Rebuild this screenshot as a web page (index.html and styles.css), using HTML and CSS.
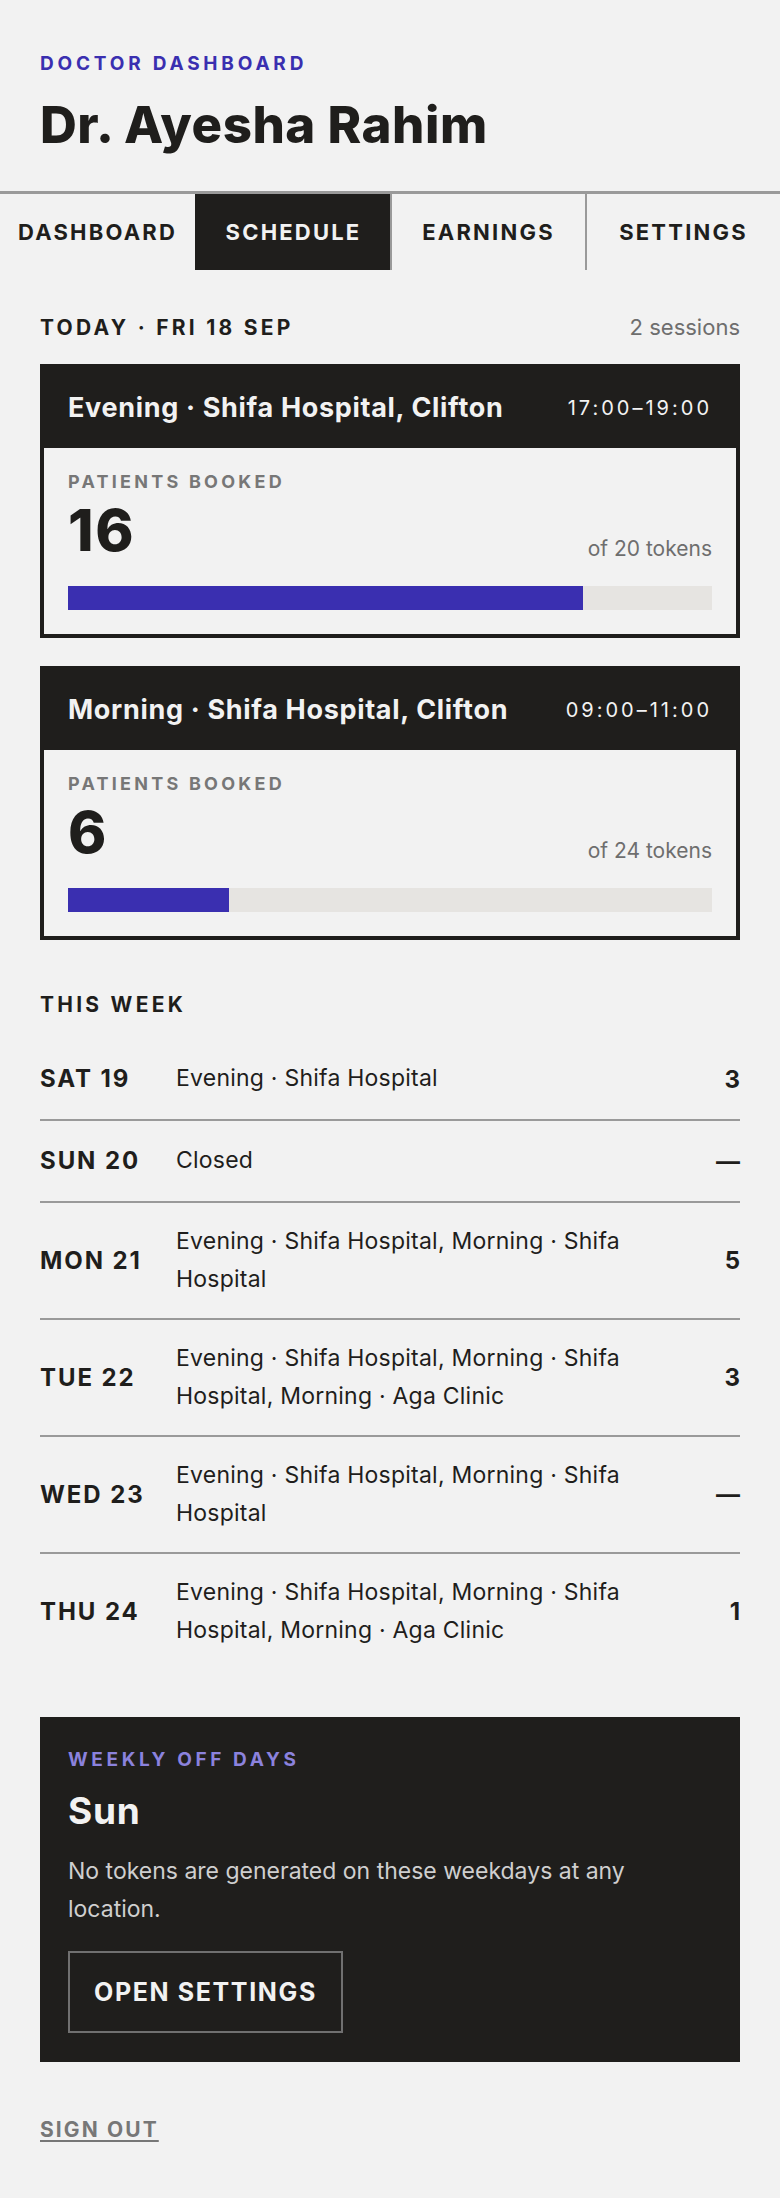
FILE: index.html
```html
<!DOCTYPE html>
<html lang="en">
<head>
<meta charset="utf-8">
<title>Doctor Dashboard – Schedule</title>
<link rel="stylesheet" href="styles.css">
</head>
<body>
<header class="top">
  <p class="eyebrow">Doctor Dashboard</p>
  <h1 class="name">Dr. Ayesha Rahim</h1>
</header>

<nav class="tabs">
  <a class="tab">Dashboard</a>
  <a class="tab active">Schedule</a>
  <a class="tab">Earnings</a>
  <a class="tab">Settings</a>
</nav>

<main class="content">
  <section class="today">
    <div class="section-head">
      <h2 class="section-title">Today · Fri 18 Sep</h2>
      <span class="meta">2 sessions</span>
    </div>

    <article class="session">
      <div class="session-head">
        <h3 class="session-title">Evening · Shifa Hospital, Clifton</h3>
        <span class="time">17:00–19:00</span>
      </div>
      <div class="session-body">
        <p class="label">Patients booked</p>
        <div class="count-row">
          <span class="count">16</span>
          <span class="of">of 20 tokens</span>
        </div>
        <div class="bar"><div class="fill" style="width:80%"></div></div>
      </div>
    </article>

    <article class="session">
      <div class="session-head">
        <h3 class="session-title">Morning · Shifa Hospital, Clifton</h3>
        <span class="time">09:00–11:00</span>
      </div>
      <div class="session-body">
        <p class="label">Patients booked</p>
        <div class="count-row">
          <span class="count">6</span>
          <span class="of">of 24 tokens</span>
        </div>
        <div class="bar"><div class="fill" style="width:25%"></div></div>
      </div>
    </article>
  </section>

  <section class="week">
    <h2 class="section-title week-title">This Week</h2>
    <ul class="days">
      <li class="day"><span class="day-name">SAT 19</span><span class="day-text">Evening · Shifa Hospital</span><span class="day-count">3</span></li>
      <li class="day"><span class="day-name">SUN 20</span><span class="day-text">Closed</span><span class="day-count">—</span></li>
      <li class="day"><span class="day-name">MON 21</span><span class="day-text">Evening · Shifa Hospital, Morning · Shifa Hospital</span><span class="day-count">5</span></li>
      <li class="day"><span class="day-name">TUE 22</span><span class="day-text">Evening · Shifa Hospital, Morning · Shifa Hospital, Morning · Aga Clinic</span><span class="day-count">3</span></li>
      <li class="day"><span class="day-name">WED 23</span><span class="day-text">Evening · Shifa Hospital, Morning · Shifa Hospital</span><span class="day-count">—</span></li>
      <li class="day"><span class="day-name">THU 24</span><span class="day-text">Evening · Shifa Hospital, Morning · Shifa Hospital, Morning · Aga Clinic</span><span class="day-count">1</span></li>
    </ul>
  </section>

  <section class="offdays">
    <p class="off-eyebrow">Weekly off days</p>
    <h2 class="off-title">Sun</h2>
    <p class="off-text">No tokens are generated on these weekdays at any location.</p>
    <a class="off-button">Open Settings</a>
  </section>

  <a class="signout">Sign out</a>
</main>
</body>
</html>
```

FILE: styles.css
```css
* { box-sizing: border-box; }

body {
  margin: 0;
  background: #f2f2f2;
  color: #1f1e1c;
  font-family: "Inter", "Liberation Sans", Arial, sans-serif;
}

/* Header */
.top {
  padding: 52px 40px 39px;
}
.eyebrow {
  margin: 0 0 22px;
  font-size: 19px;
  line-height: 23px;
  font-weight: 700;
  letter-spacing: 0.2em;
  text-transform: uppercase;
  color: #3a2fb0;
}
.name {
  margin: 0;
  font-size: 51px;
  line-height: 55px;
  font-weight: 800;
  letter-spacing: 0.01em;
}

/* Tabs */
.tabs {
  display: grid;
  grid-template-columns: repeat(4, 1fr);
  border-top: 3px solid #9a9a9a;
}
.tab {
  display: flex;
  align-items: center;
  justify-content: center;
  height: 76px;
  font-size: 22px;
  font-weight: 700;
  letter-spacing: 0.1em;
  text-transform: uppercase;
  color: #1f1e1c;
}
.tab + .tab {
  border-left: 2px solid #9a9a9a;
}
.tab.active {
  background: #1f1e1c;
  border-left-color: #1f1e1c;
  color: #f2f2f2;
}

/* Content */
.content {
  padding: 44px 40px 56px;
}
.section-head {
  display: flex;
  justify-content: space-between;
  align-items: baseline;
  margin-bottom: 22px;
}
.section-title {
  margin: 0;
  font-size: 21px;
  line-height: 28px;
  font-weight: 700;
  letter-spacing: 0.155em;
  text-transform: uppercase;
}
.meta {
  font-size: 22px;
  color: #6e6e6e;
}

/* Session cards */
.session {
  border: 4px solid #1f1e1c;
}
.session + .session {
  margin-top: 28px;
}
.session-head {
  display: flex;
  justify-content: space-between;
  align-items: center;
  padding: 24px;
  background: #1f1e1c;
  color: #f2f2f2;
}
.session-title {
  margin: 0;
  font-size: 27px;
  line-height: 32px;
  font-weight: 700;
  letter-spacing: 0.025em;
}
.time {
  font-size: 20px;
  letter-spacing: 0.15em;
}
.session-body {
  padding: 24px;
}
.label {
  margin: 0 0 10px;
  font-size: 18px;
  line-height: 20px;
  font-weight: 700;
  letter-spacing: 0.18em;
  text-transform: uppercase;
  color: #777;
}
.count-row {
  display: flex;
  justify-content: space-between;
  align-items: flex-end;
}
.count {
  font-size: 58px;
  line-height: 56px;
  font-weight: 800;
  letter-spacing: 0.03em;
}
.of {
  margin-bottom: -2px;
  font-size: 21px;
  line-height: 22px;
  color: #6e6e6e;
}
.bar {
  height: 24px;
  margin-top: 28px;
  background: #e6e4e1;
}
.fill {
  height: 100%;
  background: #3a2fb0;
}

/* This week */
.week {
  margin-top: 51px;
}
.week-title {
  margin-bottom: 20px;
}
.days {
  margin: 0;
  padding: 0;
  list-style: none;
}
.day {
  display: grid;
  grid-template-columns: 136px 1fr 48px;
  align-items: center;
  padding: 20px 0;
  border-bottom: 2px solid #9a9a9a;
}
.day:last-child {
  border-bottom: none;
}
.day-name {
  font-size: 24px;
  line-height: 40px;
  font-weight: 700;
  letter-spacing: 0.08em;
}
.day-text {
  font-size: 23px;
  line-height: 37.5px;
  letter-spacing: 0.01em;
}
.day-count {
  text-align: right;
  font-size: 24px;
  font-weight: 700;
}

/* Off days */
.offdays {
  margin-top: 48px;
  padding: 31px 28px 29px;
  background: #1f1e1c;
  color: #f2f2f2;
}
.off-eyebrow {
  margin: 0 0 18px;
  font-size: 19px;
  line-height: 23px;
  font-weight: 700;
  letter-spacing: 0.19em;
  text-transform: uppercase;
  color: #8b82dd;
}
.off-title {
  margin: 0 0 19px;
  font-size: 37px;
  line-height: 44px;
  font-weight: 700;
  letter-spacing: 0.02em;
}
.off-text {
  margin: 0 0 23px;
  font-size: 23px;
  line-height: 38px;
  color: #cfcfcf;
}
.off-button {
  display: inline-block;
  padding: 24px;
  border: 2px solid #707070;
  font-size: 25px;
  line-height: 30px;
  font-weight: 700;
  letter-spacing: 0.065em;
  text-transform: uppercase;
  color: #f2f2f2;
}

.signout {
  display: inline-block;
  margin-top: 54px;
  font-size: 21px;
  line-height: 28px;
  font-weight: 700;
  letter-spacing: 0.1em;
  text-transform: uppercase;
  color: #777;
  text-decoration: underline;
  text-decoration-thickness: 2px;
  text-underline-offset: 3px;
}
```
